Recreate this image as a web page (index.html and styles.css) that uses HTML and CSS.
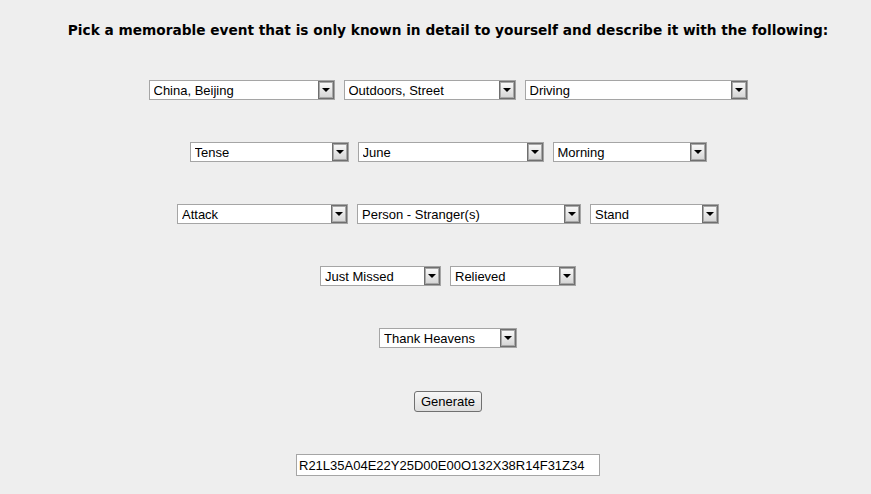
FILE: index.html
```html
<!DOCTYPE html>
<html lang="en">
<head>
  <meta charset="UTF-8">
  <title>Memorable Event Generator</title>
  <link rel="stylesheet" href="styles.css">
</head>
<body>
  <div class="page">
    <h3>Pick a memorable event that is only known in detail to yourself and describe it with the following:</h3>

    <div class="row">
      <span class="pick w186"><select><option>China, Beijing</option><option>USA, New York</option></select><span class="arrow"></span></span>
      <span class="pick w172"><select><option>Outdoors, Street</option><option>Indoors, Home</option></select><span class="arrow"></span></span>
      <span class="pick w223"><select><option>Driving</option><option>Walking</option></select><span class="arrow"></span></span>
    </div>

    <div class="row">
      <span class="pick w159"><select><option>Tense</option><option>Calm</option></select><span class="arrow"></span></span>
      <span class="pick w186"><select><option>June</option><option>July</option></select><span class="arrow"></span></span>
      <span class="pick w154"><select><option>Morning</option><option>Evening</option></select><span class="arrow"></span></span>
    </div>

    <div class="row">
      <span class="pick w171"><select><option>Attack</option><option>Meeting</option></select><span class="arrow"></span></span>
      <span class="pick w224"><select><option>Person - Stranger(s)</option><option>Person - Friend(s)</option></select><span class="arrow"></span></span>
      <span class="pick w129"><select><option>Stand</option><option>Run</option></select><span class="arrow"></span></span>
    </div>

    <div class="row">
      <span class="pick w121"><select><option>Just Missed</option><option>Hit</option></select><span class="arrow"></span></span>
      <span class="pick w126"><select><option>Relieved</option><option>Scared</option></select><span class="arrow"></span></span>
    </div>

    <div class="row">
      <span class="pick w138"><select><option>Thank Heavens</option><option>Never Again</option></select><span class="arrow"></span></span>
    </div>

    <div class="row">
      <button class="generate">Generate</button>
    </div>

    <div class="row">
      <input type="text" class="code" value="R21L35A04E22Y25D00E00O132X38R14F31Z34">
    </div>
  </div>
</body>
</html>
```

FILE: styles.css
```css
body {
  margin: 0;
  background: #eeeeee;
  font-family: 'Liberation Sans', Arial, sans-serif;
  font-size: 13px;
  color: #000;
  overflow: hidden;
}
.page {
  padding: 20px 0 0 25px;
  display: flex;
  flex-direction: column;
  gap: 42px;
}
h3 {
  margin: 0 0 -2px;
  font-family: 'DejaVu Sans', Verdana, sans-serif;
  font-size: 13.7px;
  line-height: 20px;
  font-weight: bold;
  text-align: center;
}
.row {
  display: flex;
  justify-content: center;
  gap: 9px;
}
.pick {
  position: relative;
  display: block;
  height: 20px;
}
.pick select {
  appearance: none;
  -webkit-appearance: none;
  width: 100%;
  height: 20px;
  margin: 0;
  padding: 0 20px 0 4px;
  border: 1px solid #a5a5a5;
  border-radius: 0;
  background: #fff;
  font-family: 'Liberation Sans', Arial, sans-serif;
  font-size: 13px;
  color: #000;
  outline: none;
}
.arrow {
  position: absolute;
  top: 1px;
  right: 1px;
  width: 14px;
  height: 16px;
  border: 1px solid #6f6f6f;
  box-shadow: inset 0 0 0 1px #a8a8a8;
  background: linear-gradient(#fafafa, #d4d4d4);
  pointer-events: none;
}
.arrow::after {
  content: "";
  position: absolute;
  left: 3px;
  top: 6px;
  border-left: 4px solid transparent;
  border-right: 4px solid transparent;
  border-top: 4px solid #000;
}
.w121 { width: 121px; }
.w126 { width: 126px; }
.w129 { width: 129px; }
.w138 { width: 138px; }
.w154 { width: 154px; }
.w159 { width: 159px; }
.w171 { width: 171px; }
.w172 { width: 172px; }
.w186 { width: 186px; }
.w223 { width: 223px; }
.w224 { width: 224px; }
.generate {
  margin-top: 1px;
  width: 68px;
  height: 21px;
  padding: 0;
  border: 1px solid #707070;
  border-radius: 3px;
  background: linear-gradient(#f7f7f7, #dedede);
  font-family: 'Liberation Sans', Arial, sans-serif;
  font-size: 13px;
  color: #000;
}
.code {
  margin-top: 0;
  width: 304px;
  height: 22px;
  box-sizing: border-box;
  padding: 0 2px;
  border: 1px solid #a5a5a5;
  background: #fff;
  font-family: 'Liberation Sans', Arial, sans-serif;
  font-size: 13px;
  color: #000;
  outline: none;
}
```
